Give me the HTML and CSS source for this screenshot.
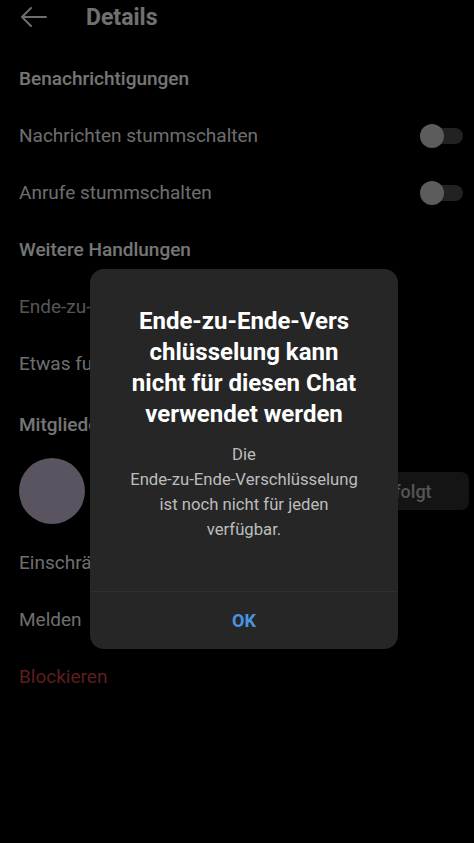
FILE: index.html
```html
<!DOCTYPE html>
<html lang="de">
<head>
    <meta charset="UTF-8">
    <meta name="viewport" content="width=device-width, initial-scale=1.0">
    <title>Details</title>
    <link rel="stylesheet" href="styles.css">
</head>
<body>
    <div class="header">
        <svg class="back-icon" width="28" height="24" viewBox="0 0 28 24">
            <path d="M27 12H3M12 3L3 12L12 21" fill="none" stroke="#dcdcdc" stroke-width="2" stroke-linecap="round" stroke-linejoin="round"/>
        </svg>
        <span class="header-title">Details</span>
    </div>

    <div class="row heading">Benachrichtigungen</div>
    <div class="row">
        <span>Nachrichten stummschalten</span>
        <span class="toggle"><span class="knob"></span></span>
    </div>
    <div class="row">
        <span>Anrufe stummschalten</span>
        <span class="toggle"><span class="knob"></span></span>
    </div>

    <div class="row heading">Weitere Handlungen</div>
    <div class="row disabled">Ende-zu-Ende-Verschlüsselung verwenden</div>
    <div class="row">Etwas funktioniert nicht</div>

    <div class="row heading members">Mitglieder</div>
    <div class="member">
        <div class="avatar"></div>
        <div class="member-name"></div>
        <button class="follow-btn">Gefolgt</button>
    </div>

    <div class="row">Einschränken</div>
    <div class="row">Melden</div>
    <div class="row danger">Blockieren</div>

    <div class="overlay">
        <div class="dialog">
            <div class="dialog-title">Ende-zu-Ende-Vers<br>chlüsselung kann<br>nicht für diesen Chat<br>verwendet werden</div>
            <div class="dialog-text">Die<br>Ende-zu-Ende-Verschlüsselung<br>ist noch nicht für jeden<br>verfügbar.</div>
            <div class="dialog-actions">
                <button class="ok-btn">OK</button>
            </div>
        </div>
    </div>
</body>
</html>
```

FILE: styles.css
```css
body {
    font-family: Roboto, "Noto Sans", sans-serif;
    background-color: #000;
    color: #dcdcdc;
    margin: 0;
    padding: 0;
    height: 843px;
    overflow: hidden;
    position: relative;
}

.header {
    display: flex;
    align-items: center;
    height: 34px;
    margin-bottom: 16px;
    padding-left: 19px;
}

.back-icon {
    display: block;
}

.header-title {
    margin-left: 39px;
    font-size: 23px;
    font-weight: 700;
    color: #e0e0e0;
}

.row {
    display: flex;
    align-items: center;
    justify-content: space-between;
    height: 57px;
    padding: 0 11px 0 19px;
    font-size: 19px;
    white-space: nowrap;
}

.heading {
    font-weight: 500;
    color: #eaeaea;
}

.members {
    height: 64px;
}

.disabled {
    color: #aaa;
}

.danger {
    color: #b43c3c;
}

.toggle {
    position: relative;
    width: 43px;
    height: 24px;
    display: flex;
    align-items: center;
}

.toggle::before {
    content: "";
    display: block;
    margin-left: 10px;
    width: 33px;
    height: 16px;
    border-radius: 8px;
    background-color: #444;
}

.knob {
    position: absolute;
    left: 0;
    top: 0;
    width: 24px;
    height: 24px;
    border-radius: 50%;
    background-color: #b8b8b8;
}

.member {
    display: flex;
    align-items: center;
    padding: 2px 5px 10px 19px;
}

.avatar {
    width: 66px;
    height: 66px;
    border-radius: 50%;
    background-color: #b4a6c0;
}

.member-name {
    flex: 1;
}

.follow-btn {
    width: 134px;
    height: 38px;
    border: none;
    border-radius: 8px;
    background-color: #282828;
    color: #aaa;
    font-family: Roboto, sans-serif;
    font-size: 18px;
    font-weight: 500;
}

.overlay {
    position: absolute;
    top: 0;
    left: 0;
    right: 0;
    bottom: 0;
    background-color: rgba(0, 0, 0, 0.5);
}

.dialog {
    position: absolute;
    top: 269px;
    left: 90px;
    width: 308px;
    height: 380px;
    background-color: #262626;
    border-radius: 14px;
    display: flex;
    flex-direction: column;
    text-align: center;
}

.dialog-title {
    padding-top: 37px;
    font-size: 24px;
    line-height: 31px;
    font-weight: 700;
    color: #fff;
}

.dialog-text {
    margin-top: 12px;
    font-size: 16.7px;
    line-height: 25px;
    color: #bdbdbd;
}

.dialog-actions {
    margin-top: auto;
    height: 57px;
    border-top: 1px solid #303030;
    display: flex;
    align-items: center;
    justify-content: center;
}

.ok-btn {
    background: none;
    border: none;
    color: #4a94e0;
    font-family: Roboto, sans-serif;
    font-size: 18px;
    font-weight: 700;
    cursor: pointer;
}
```
